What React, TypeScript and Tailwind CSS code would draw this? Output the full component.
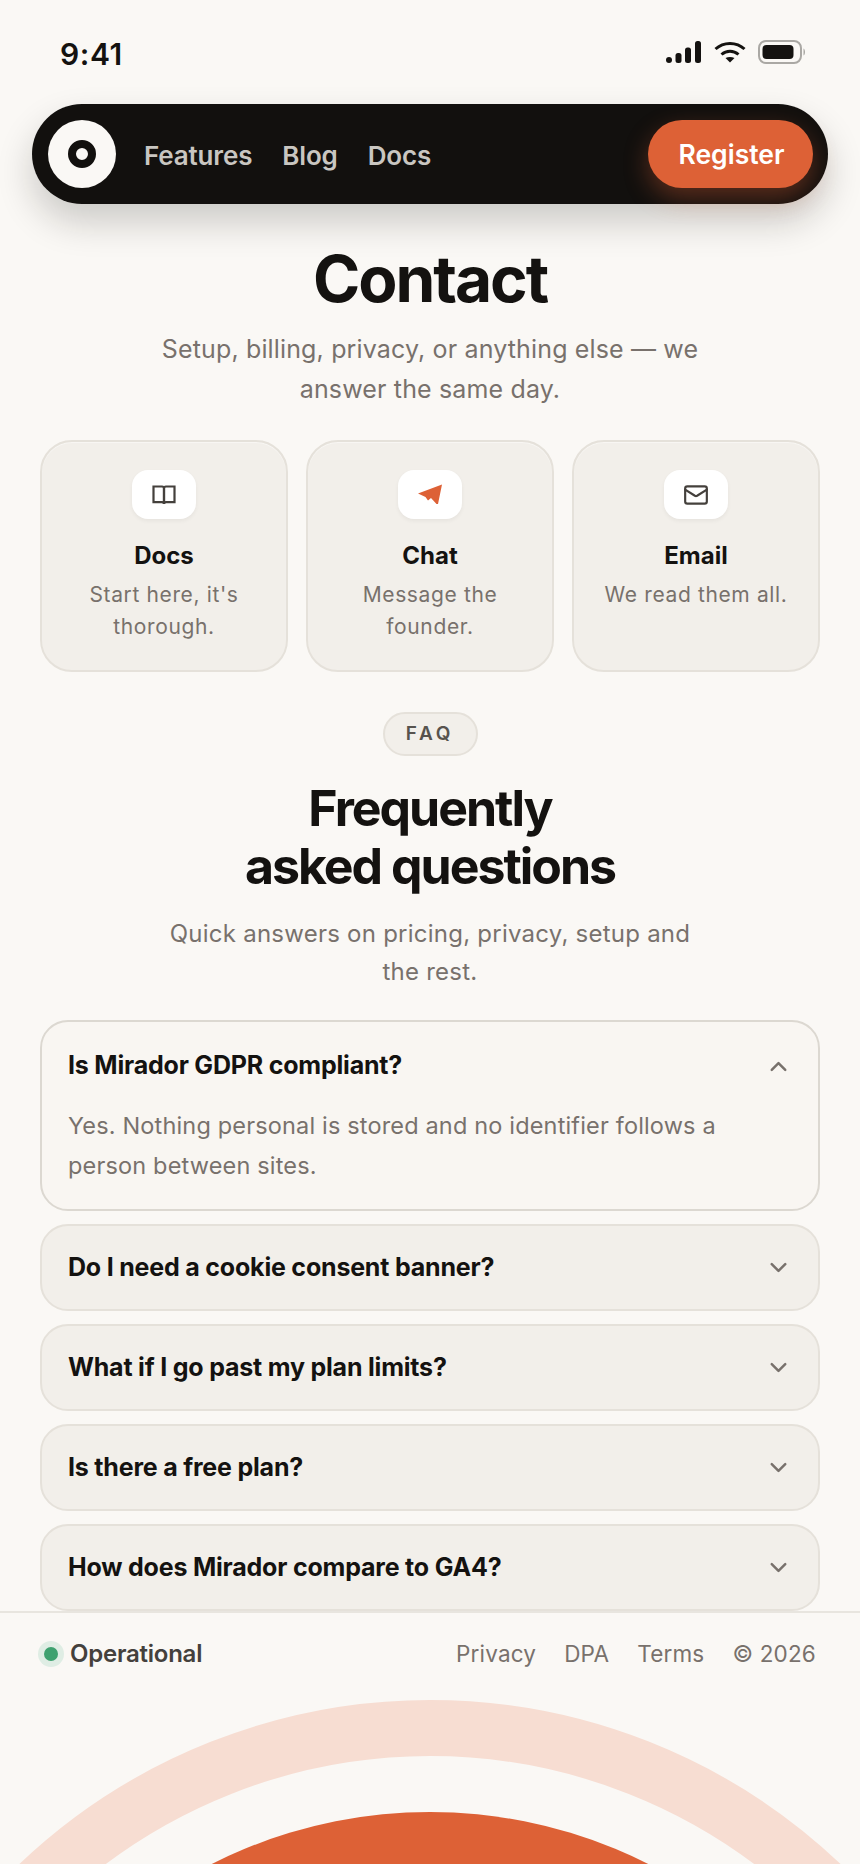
import { ChevronDown, ChevronUp, Mail } from "lucide-react";

const faqs = [
  "Do I need a cookie consent banner?",
  "What if I go past my plan limits?",
  "Is there a free plan?",
  "How does Mirador compare to GA4?",
];

function BookIcon() {
  return (
    <svg width="24" height="20" viewBox="0 0 24 20" fill="none" stroke="#44403c" strokeWidth="2.2">
      <path d="M1.500 1.500h8.500c1.300 0 2 .8 2 2V19c0-1-.8-1.800-2-1.800H1.500z" />
      <path d="M22.500 1.500h-8.500c-1.300 0-2 .8-2 2V19c0-1 .8-1.800 2-1.800h8.500z" />
    </svg>
  );
}

function PlaneIcon() {
  return (
    <svg width="26" height="22" viewBox="0 0 26 22" fill="#dd6136">
      <path d="M25 0.500 L1 9.500 L8.500 13 L11 16.500 L14 14 L19.500 20 L21 20 Z" />
    </svg>
  );
}

function Card({ icon, title, desc }: { icon: React.ReactNode; title: string; desc: string[] }) {
  return (
    <div className="flex h-[232px] flex-col items-center rounded-[32px] border-2 border-[#e5e1da] bg-[#f2efea] pt-[28px] shadow-[inset_0_1px_1px_rgba(255,255,255,0.5)]">
      <div className="flex h-[49px] w-[64px] items-center justify-center rounded-2xl bg-white shadow-[0_2px_4px_rgba(20,18,16,0.05)]">
        {icon}
      </div>
      <div className="mt-[21px] text-[24px] leading-[32px] font-[650] text-[#141210]">{title}</div>
      <div className="mt-[7px] text-center text-[21px] leading-[32px] tracking-[0.03em] text-[#78716c]">
        {desc.map((d) => (
          <div key={d}>{d}</div>
        ))}
      </div>
    </div>
  );
}

export default function App() {
  return (
    <div
      className="relative h-[1864px] w-[860px] overflow-hidden bg-[#faf8f5] text-[#141210]"
      style={{ fontFamily: 'Inter, "Liberation Sans", sans-serif' }}
    >
      {/* status bar */}
      <div className="flex h-[104px] items-start justify-between pt-[36px] pr-[54px] pl-[60px]">
        <div className="text-[30px] leading-[36px] font-semibold tracking-[0.02em]">9:41</div>
        <div className="flex items-center gap-[13px] pt-[4px]">
          <svg width="35" height="22" viewBox="0 0 35 22" fill="#141210">
            <circle cx="3" cy="19" r="3" />
            <rect x="9.500" y="12" width="6" height="10" rx="2.500" />
            <rect x="19" y="6.500" width="6" height="15.500" rx="2.500" />
            <rect x="29" y="0" width="6" height="22" rx="2.500" />
          </svg>
          <svg width="32" height="22" viewBox="0 0 32 22" fill="none" stroke="#141210" strokeWidth="3" className="mr-[-1px]">
            <path d="M1.500 8 C9.500 0.500 22.500 0.500 30.500 8" />
            <path d="M7.500 13.500 C12.500 9 19.500 9 24.500 13.500" />
            <path d="M16 21.500 L11.500 17 C14 15.500 18 15.500 20.500 17 Z" fill="#141210" stroke="none" />
          </svg>
          <svg width="48" height="24" viewBox="0 0 48 24" fill="none">
            <rect x="1" y="1" width="42" height="22" rx="7" stroke="#aaa8a4" strokeWidth="2" />
            <rect x="4.500" y="5" width="31" height="14" rx="4" fill="#141210" />
            <path d="M45.500 8.500 C47.500 9.500 47.500 14.500 45.500 15.500 Z" fill="#aaa8a4" />
          </svg>
        </div>
      </div>

      {/* nav */}
      <div className="mx-[32px] flex h-[100px] items-center rounded-[50px] bg-[#12100e] pr-[15px] pl-[16px] shadow-[0_18px_36px_rgba(20,18,16,0.2)]">
        <div className="flex h-[68px] w-[68px] items-center justify-center rounded-full bg-[#faf8f5]">
          <div className="h-[28px] w-[28px] rounded-full border-[8px] border-[#12100e]" />
        </div>
        <div className="ml-[28px] flex gap-[30px] pt-[2px] text-[26px] font-[560] tracking-[-0.006em] text-[#c9c6c1]">
          <span>Features</span>
          <span>Blog</span>
          <span>Docs</span>
        </div>
        <div className="ml-auto flex h-[68px] w-[165px] items-center justify-center rounded-full bg-[#dd6136] pt-[2px] pl-[2px] text-[26.5px] font-semibold text-white shadow-[0_10px_24px_rgba(224,98,54,0.35)]">
          Register
        </div>
      </div>

      {/* contact */}
      <div className="flex flex-col items-center px-[40px]">
        <h1 className="mt-[39px] text-[64px] leading-[72px] font-bold tracking-[-0.032em]">Contact</h1>
        <p className="mt-[14px] text-center text-[25px] leading-[40px] tracking-[0.006em] text-[#78716c]">
          Setup, billing, privacy, or anything else — we
          <br />
          answer the same day.
        </p>

        <div className="mt-[31px] grid w-full grid-cols-3 gap-[18px]">
          <Card icon={<BookIcon />} title="Docs" desc={["Start here, it's", "thorough."]} />
          <Card icon={<PlaneIcon />} title="Chat" desc={["Message the", "founder."]} />
          <Card
            icon={<Mail size={26} strokeWidth={2} color="#44403c" />}
            title="Email"
            desc={["We read them all."]}
          />
        </div>

        <div className="mt-[40px] flex h-[44px] w-[95px] items-center justify-center rounded-full border-2 border-[#e5e1da] bg-[#f2efea] text-[19px] font-semibold tracking-[0.2em] text-[#57534e]">
          FAQ
        </div>

        <h2 className="mt-[23px] text-center text-[50px] leading-[58px] font-bold tracking-[-0.04em]">
          Frequently
          <br />
          asked questions
        </h2>
        <p className="mt-[20px] text-center text-[24px] leading-[38px] tracking-[0.01em] text-[#78716c]">
          Quick answers on pricing, privacy, setup and
          <br />
          the rest.
        </p>

        <div className="mt-[29px] flex w-full flex-col gap-[13px]">
          <div className="h-[191px] rounded-[28px] border-2 border-[#dcd8d1] bg-[#f9f6f2] px-[26px]">
            <div className="flex h-[84px] items-center justify-between pt-[4px]">
              <span className="text-[25px] font-[650] tracking-[-0.008em]">Is Mirador GDPR compliant?</span>
              <ChevronUp size={27} strokeWidth={2.2} color="#78716c" />
            </div>
            <p className="text-[23.5px] leading-[40px] tracking-[0.007em] text-[#78716c]">
              Yes. Nothing personal is stored and no identifier follows a
              <br />
              person between sites.
            </p>
          </div>
          {faqs.map((q) => (
            <div
              key={q}
              className="flex h-[87px] items-center justify-between rounded-[28px] border-2 border-[#e5e1da] bg-[#f2efea] px-[26px]"
            >
              <span className="text-[25px] font-[650] tracking-[-0.008em]">{q}</span>
              <ChevronDown size={27} strokeWidth={2.2} color="#78716c" />
            </div>
          ))}
        </div>
      </div>

      {/* footer */}
      <div className="flex h-[84px] items-center justify-between border-t-2 border-[#e8e5df] pr-[44px] pl-[38px]">
        <div className="flex items-center gap-[6px]">
          <div className="flex h-[26px] w-[26px] items-center justify-center rounded-full bg-[#dfede4]">
            <div className="h-[14px] w-[14px] rounded-full bg-[#3ea16f]" />
          </div>
          <span className="text-[24px] font-semibold tracking-[-0.01em] text-[#44403c]">Operational</span>
        </div>
        <div className="flex gap-[28px] text-[22.5px] tracking-[0.008em] text-[#78716c]">
          <span>Privacy</span>
          <span>DPA</span>
          <span>Terms</span>
          <span>© 2026</span>
        </div>
      </div>

      {/* sun */}
      <svg className="absolute top-[1700px] left-0" width="860" height="164" viewBox="0 0 860 164">
        <circle cx="430" cy="596" r="568" fill="none" stroke="#f7ddd2" strokeWidth="56" />
        <circle cx="430" cy="596" r="484" fill="#dd6136" />
      </svg>
    </div>
  );
}
